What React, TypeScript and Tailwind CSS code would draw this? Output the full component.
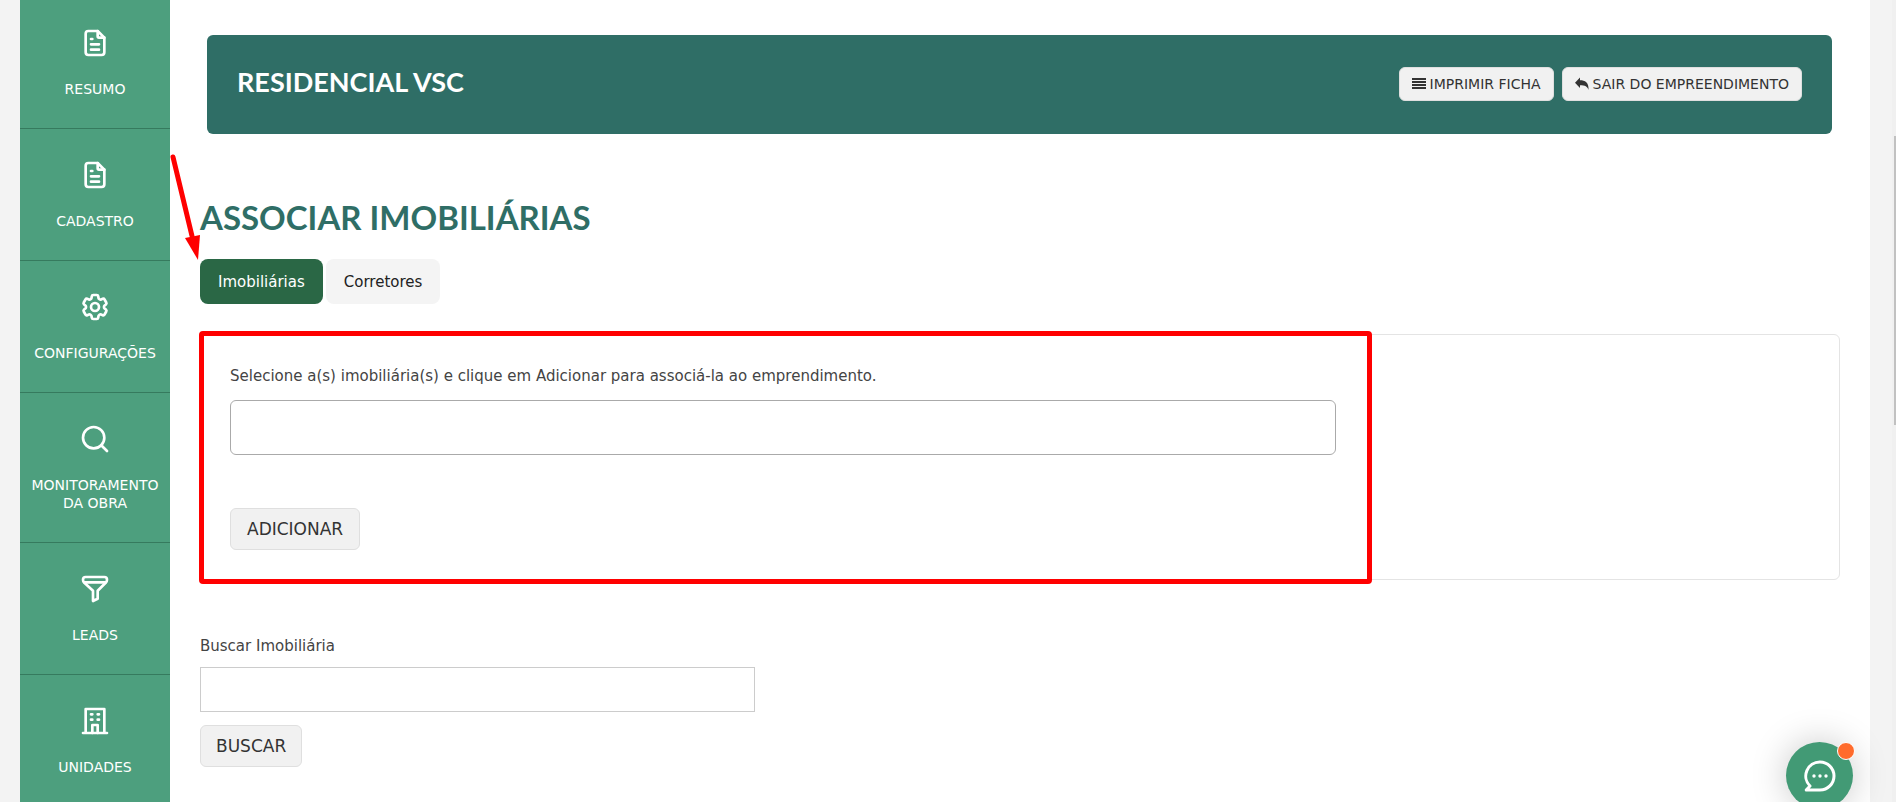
import { useState, type ReactNode } from 'react';
import { HiOutlineCog6Tooth } from 'react-icons/hi2';
import { Search } from 'lucide-react';

const BUTTON = 'rounded-md border border-[#dfdfdf] bg-[#f1f1f1] text-[#333]';
const TABS = ['Imobiliárias', 'Corretores'];

function StrokeIcon({ children }: { children: ReactNode }) {
  return (
    <svg viewBox="0 0 24 24" className="h-8 w-8" fill="none" stroke="currentColor" strokeWidth="2" strokeLinecap="round" strokeLinejoin="round" aria-hidden="true">
      {children}
    </svg>
  );
}

const fileIcon = (
  <StrokeIcon>
    <path d="M14 3v4a1 1 0 0 0 1 1h4" />
    <path d="M17 21H7a2 2 0 0 1-2-2V5a2 2 0 0 1 2-2h7l5 5v11a2 2 0 0 1-2 2z" />
    <path d="M9 9h1M9 13h6M9 17h6" />
  </StrokeIcon>
);

const funnelIcon = (
  <StrokeIcon>
    <path d="M5 3h14a2 2 0 0 1 2 2a3 3 0 0 1-1 2.3L14 13.3V19.3L10.5 21V13.3L4 7.3A3 3 0 0 1 3 5a2 2 0 0 1 2-2z" />
    <path d="M4 7h16" />
  </StrokeIcon>
);

const buildingIcon = (
  <StrokeIcon>
    <path d="M3 21h18M5 21V3h14v18" />
    <path d="M9 7h1M14 7h1M9 11h1M14 11h1" />
    <path d="M10 21v-6h4v6" />
  </StrokeIcon>
);

const MENU = [
  { label: 'RESUMO', icon: fileIcon },
  { label: 'CADASTRO', icon: fileIcon },
  { label: 'CONFIGURAÇÕES', icon: <HiOutlineCog6Tooth className="h-8 w-8" strokeWidth={2} /> },
  { label: 'MONITORAMENTO DA OBRA', icon: <Search className="h-8 w-8" strokeWidth={2} /> },
  { label: 'LEADS', icon: funnelIcon },
  { label: 'UNIDADES', icon: buildingIcon },
];

function Sidebar() {
  return (
    <nav className="-mt-[3px] w-[150px] flex-none bg-[#4d9f7e]">
      {MENU.map((item) => (
        <a key={item.label} href="#" className="flex flex-col items-center border-b border-[#367a5e] px-3 pt-[30px] pb-[30px] text-white">
          {item.icon}
          <span className="mt-[21px] text-center text-[14px] leading-[18px] font-medium">{item.label}</span>
        </a>
      ))}
    </nav>
  );
}

function ChatButton() {
  return (
    <button type="button" aria-label="Chat" className="fixed right-[43px] -bottom-[7px] flex h-[67px] w-[67px] items-center justify-center rounded-full bg-[#429a75] text-white shadow-[0_0_36px_rgba(0,0,0,0.22)]">
      <svg viewBox="0 0 32 32" className="h-8 w-8" fill="none" stroke="currentColor" strokeWidth="3" strokeLinejoin="round" aria-hidden="true">
        <path d="M16 2a14 14 0 0 1 0 28H2.200l3.800-4A14 14 0 0 1 16 2z" />
        <g fill="currentColor" stroke="none">
          <circle cx="10" cy="16" r="1.700" />
          <circle cx="16" cy="16" r="1.700" />
          <circle cx="22" cy="16" r="1.700" />
        </g>
      </svg>
      <span className="absolute top-0 -right-0.5 h-[18px] w-[18px] rounded-full border border-white bg-[#ff6b2c]" />
    </button>
  );
}

export default function App() {
  const [tab, setTab] = useState(TABS[0]);

  return (
    <div className="relative flex h-screen overflow-hidden bg-[#f3f3f3] pl-5 font-['DejaVu_Sans',sans-serif] text-[15px] text-[#444]">
      <Sidebar />

      <main className="mr-[26px] min-w-0 flex-1 bg-white px-[30px] pt-[35px]">
        <header className="mr-2 ml-[7px] flex h-[99px] items-start justify-between rounded-md bg-[#2f6e66] pt-8 pr-[30px] pl-[30px]">
          <h1 className="font-['Lato',sans-serif] text-[27px] leading-[30px] font-bold text-white">RESIDENCIAL VSC</h1>
          <div className="flex gap-2 text-[14px]">
            <button type="button" className={`${BUTTON} flex h-[34px] items-center gap-1 px-3`}>
              <svg viewBox="0 0 14 14" className="h-3.5 w-3.5" fill="currentColor" aria-hidden="true">
                <path d="M0 1h14v2H0zM0 4h14v2H0zM0 7h14v2H0zM0 10h14v2H0z" />
              </svg>
              IMPRIMIR FICHA
            </button>
            <button type="button" className={`${BUTTON} flex h-[34px] items-center gap-1 px-3`}>
              <svg viewBox="0 0 14 14" className="h-3.5 w-3.5" fill="currentColor" aria-hidden="true">
                <path d="M5 0.500V3.200C10 3.200 14 5 13.500 13C12.500 9.500 10 8.300 5 8.300V11L0 5.800z" />
              </svg>
              SAIR DO EMPREENDIMENTO
            </button>
          </div>
        </header>

        <div className="relative mt-16">
          <h2 className="font-['Lato',sans-serif] text-[33px] leading-[38px] font-bold text-[#2f6e66]">ASSOCIAR IMOBILIÁRIAS</h2>
          <svg viewBox="0 0 32 110" className="absolute -top-[46px] -left-[31px] h-[110px] w-8" aria-hidden="true">
            <path d="M4 5L23 84" stroke="#f00" strokeWidth="5" strokeLinecap="round" />
            <path d="M16 86L31 83L29 108z" fill="#f00" />
          </svg>
        </div>

        <div role="tablist" className="mt-[23px] flex gap-[3px]">
          {TABS.map((name) => (
            <button
              key={name}
              type="button"
              role="tab"
              aria-selected={tab === name}
              onClick={() => setTab(name)}
              className={`h-[45px] rounded-lg px-[18px] pt-0.5 ${tab === name ? 'bg-[#2a6745] font-medium text-white' : 'bg-[#f4f4f4] text-[#222]'}`}
            >
              {name}
            </button>
          ))}
        </div>

        <section className="mt-[30px] rounded-md border border-[#e4e4e4] p-[29px]">
          <div className="relative w-[70%]">
            <label htmlFor="imobiliarias" className="block leading-6">
              Selecione a(s) imobiliária(s) e clique em Adicionar para associá-la ao emprendimento.
            </label>
            <input id="imobiliarias" type="text" className="mt-3 block h-[55px] w-full rounded-md border border-[#aaa] px-3" />
            <button type="button" className={`${BUTTON} mt-[53px] block h-[42px] px-4 pt-0.5 text-[17px]`}>
              ADICIONAR
            </button>
            <div className="pointer-events-none absolute -top-[33px] -right-9 -bottom-[34px] -left-[31px] rounded-sm border-[5px] border-[#f00]" />
          </div>
        </section>

        <form className="mt-[54px]" onSubmit={(e) => e.preventDefault()}>
          <label htmlFor="busca" className="block leading-6">
            Buscar Imobiliária
          </label>
          <input id="busca" type="text" className="mt-[9px] block h-[45px] w-[555px] max-w-full border border-[#ccc] px-3" />
          <button type="submit" className={`${BUTTON} mt-[13px] block h-[42px] px-[15px] pt-0.5 text-[17px]`}>
            BUSCAR
          </button>
        </form>
      </main>

      {/* scroll track */}
      <div className="absolute inset-y-0 right-0 w-1 bg-[#f0f0f0]">
        <div className="mt-[136px] ml-auto h-[289px] w-0.5 bg-[#c1c1c1]" />
      </div>

      <ChatButton />
    </div>
  );
}
